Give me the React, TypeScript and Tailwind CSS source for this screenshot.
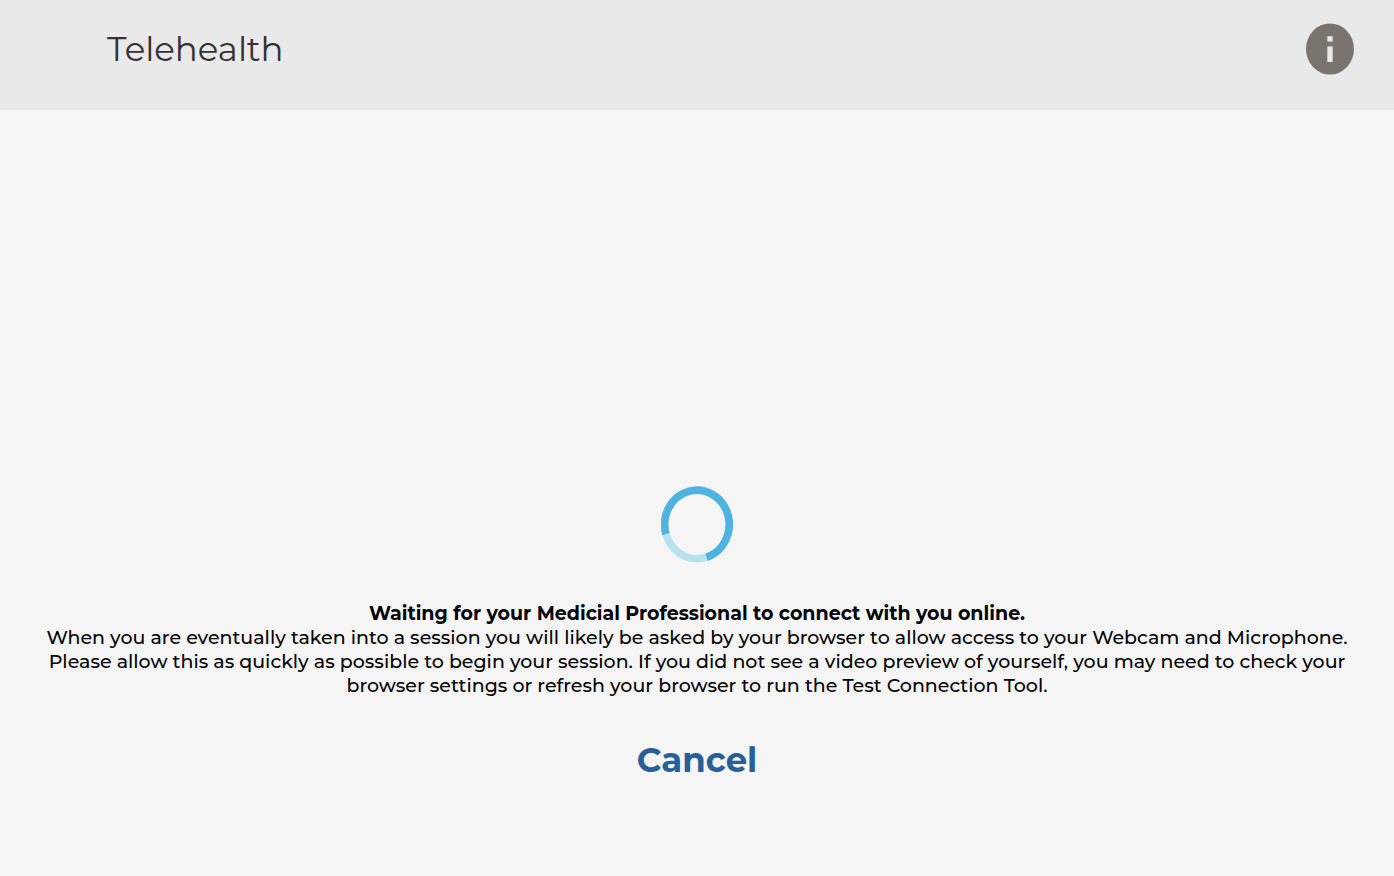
import { useState } from "react";

const InfoIcon = () => (
  <svg width="48" height="52" viewBox="0 0 48 52" aria-hidden="true">
    <ellipse cx="24" cy="26" rx="24" ry="25.6" fill="#7a746f" />
    <rect x="21.3" y="13.2" width="5.4" height="5.4" fill="#e9e9e9" />
    <rect x="21.3" y="23.4" width="5.4" height="15.6" fill="#e9e9e9" />
  </svg>
);

const Spinner = () => (
  <svg width="72" height="78" viewBox="0 0 72 78" role="img" aria-label="Loading">
    <ellipse cx="36" cy="38.5" rx="32.3" ry="34.3" fill="none" stroke="#b7e1ee" strokeWidth="7.6" />
    <path
      d="M4.9 48 A32.3 34.3 0 1 1 45.5 71.3"
      fill="none"
      stroke="#50b2de"
      strokeWidth="7.6"
    />
  </svg>
);

const Header = () => (
  <header className="flex h-[110px] items-start justify-between bg-[#e9e9e9] pt-[23px] pr-10 pl-[107px]">
    <h1 className="text-[34px] leading-[52px] text-[#353132]">Telehealth</h1>
    <button type="button" aria-label="Information" className="cursor-pointer">
      <InfoIcon />
    </button>
  </header>
);

export default function App() {
  const [waiting, setWaiting] = useState(true);

  return (
    <div className="flex min-h-screen flex-col bg-[#f5f5f5] font-[Montserrat,Inter,sans-serif] text-black">
      <Header />
      {waiting && (
        <main className="flex grow flex-col items-center justify-end px-8 pb-[92px] text-center">
          <Spinner />
          <div className="mt-[38px] text-[19px] leading-6">
            <p className="font-bold">Waiting for your Medicial Professional to connect with you online.</p>
            <p className="font-medium">
              When you are eventually taken into a session you will likely be asked by your browser to
              allow access to your Webcam and Microphone. Please allow this as quickly as possible to
              begin your session. If you did not see a video preview of yourself, you may need to check
              your browser settings or refresh your browser to run the Test Connection Tool.
            </p>
          </div>
          <button
            type="button"
            onClick={() => setWaiting(false)}
            className="mt-[38px] cursor-pointer text-[34px] leading-[48px] font-bold text-[#285f97]"
          >
            Cancel
          </button>
        </main>
      )}
    </div>
  );
}
